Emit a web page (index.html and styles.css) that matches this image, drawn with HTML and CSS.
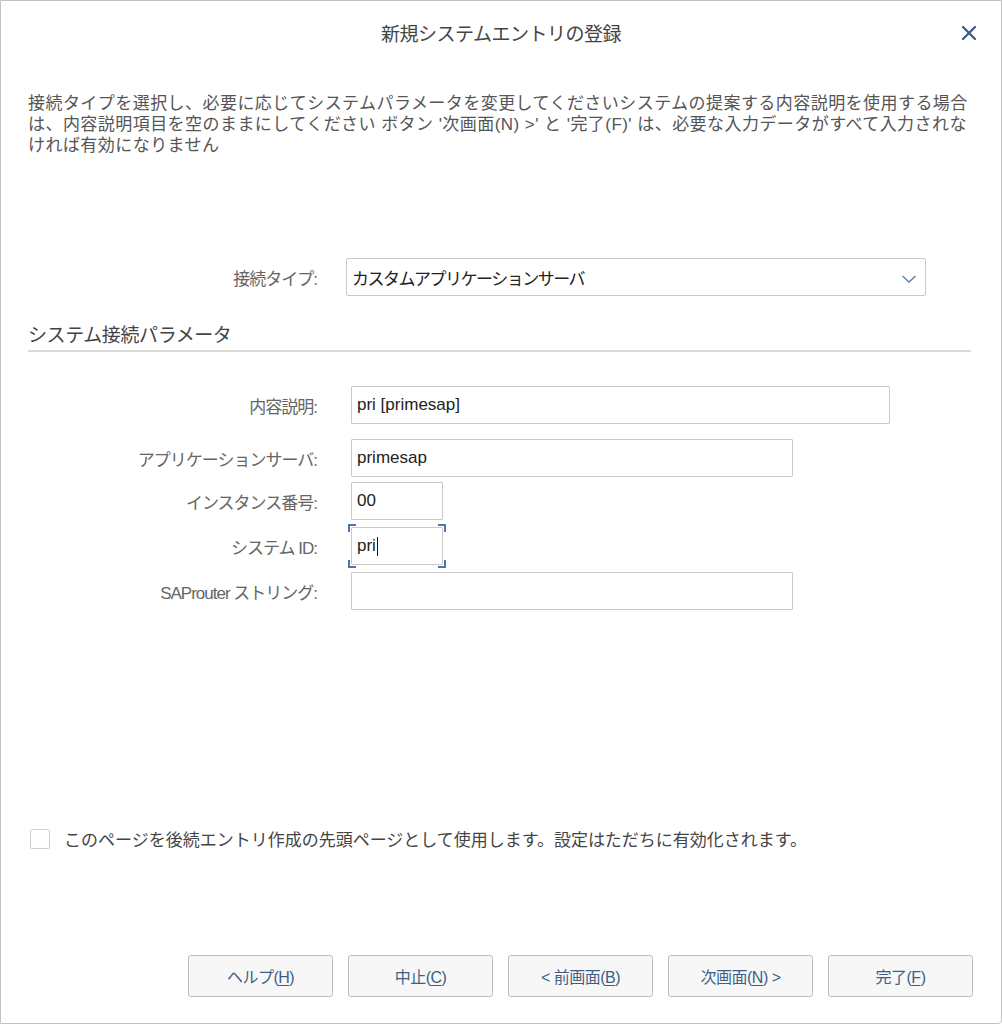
FILE: index.html
```html
<!DOCTYPE html>
<html lang="ja">
<head>
  <meta charset="UTF-8">
  <title>新規システムエントリの登録</title>
  <link rel="stylesheet" href="styles.css">
</head>
<body>

  <div class="dialog">
    <!-- タイトルバー -->
    <header class="dialog-header">
      <span></span>
      <h1 class="dialog-title">新規システムエントリの登録</h1>
      <button class="close-button" aria-label="閉じる">
        <svg width="16" height="16" viewBox="0 0 16 16">
          <path d="M2 2 L14 14 M14 2 L2 14" stroke="#3d5f86" stroke-width="2.4" stroke-linecap="round"/>
        </svg>
      </button>
    </header>

    <p class="intro">
      接続タイプを選択し、必要に応じてシステムパラメータを変更してくださいシステムの提案する内容説明を使用する場合<br>
      は、内容説明項目を空のままにしてください ボタン '次画面(N) &gt;' と '完了(F)' は、必要な入力データがすべて入力されな<br>
      ければ有効になりません
    </p>

    <div class="form-row type-row">
      <label class="form-label">接続タイプ:</label>
      <div class="select-box">
        <span>カスタムアプリケーションサーバ</span>
        <svg width="16" height="10" viewBox="0 0 16 10">
          <path d="M1.5 2 L8 8 L14.5 2" fill="none" stroke="#5a7ea6" stroke-width="1.3"/>
        </svg>
      </div>
    </div>

    <h2 class="section-title">システム接続パラメータ</h2>

    <div class="params">
      <div class="form-row first">
        <label class="form-label">内容説明:</label>
        <div class="field w-desc">pri [primesap]</div>
      </div>
      <div class="form-row">
        <label class="form-label">アプリケーションサーバ:</label>
        <div class="field w-wide">primesap</div>
      </div>
      <div class="form-row">
        <label class="form-label">インスタンス番号:</label>
        <div class="field w-short">00</div>
      </div>
      <div class="form-row">
        <label class="form-label">システム ID:</label>
        <div class="field w-short focused">pri<span class="caret"></span></div>
      </div>
      <div class="form-row">
        <label class="form-label">SAProuter ストリング:</label>
        <div class="field w-wide"></div>
      </div>
    </div>

    <label class="check-row">
      <span class="checkbox"></span>
      このページを後続エントリ作成の先頭ページとして使用します。設定はただちに有効化されます。
    </label>

    <footer class="button-bar">
      <button class="dlg-button">ヘルプ(<u>H</u>)</button>
      <button class="dlg-button">中止(<u>C</u>)</button>
      <button class="dlg-button">&lt; 前画面(<u>B</u>)</button>
      <button class="dlg-button">次画面(<u>N</u>) &gt;</button>
      <button class="dlg-button">完了(<u>F</u>)</button>
    </footer>
  </div>

</body>
</html>
```

FILE: styles.css
```css
/* ベース */
* { margin:0; padding:0; box-sizing:border-box; }
body {
  font-family:"Liberation Sans","Noto Sans CJK JP",sans-serif;
  background:#fff; color:#333;
}

/* ダイアログ枠 */
.dialog {
  width:1002px; height:1024px;
  border:1px solid #c2c2c2; border-radius:0 0 4px 0;
  display:flex; flex-direction:column;
}

/* タイトル */
.dialog-header {
  height:63px;
  display:grid; grid-template-columns:1fr auto 1fr; align-items:center;
}
.dialog-title {
  font-size:19px; font-weight:normal; color:#444; letter-spacing:-0.5px;
}
.close-button {
  justify-self:end; margin-right:22px;
  background:none; border:none; width:20px; height:20px;
  display:flex; align-items:center; justify-content:center; cursor:pointer;
}

/* 説明文 */
.intro {
  margin-top:29px; padding:0 30px 0 27px;
  font-size:17px; line-height:21px; color:#555; letter-spacing:0.45px;
  white-space:nowrap;
}

/* フォーム行 */
.form-row {
  display:grid; grid-template-columns:316px 1fr; column-gap:29px;
  align-items:center; margin-bottom:7px;
}
.form-label {
  text-align:right; font-size:17px; color:#666; letter-spacing:-1px;
}
.type-row { margin-top:102px; margin-bottom:0; }

.select-box {
  width:580px; height:38px;
  border:1px solid #c9c9c9; border-radius:2px;
  display:flex; align-items:center; justify-content:space-between;
  padding:0 8px 0 5px;
  font-size:17px; color:#222; letter-spacing:-1.5px;
}
.select-box svg { margin-top:4px; }

/* セクション見出し */
.section-title {
  margin:28px 30px 0 27px; padding-bottom:2px;
  border-bottom:2px solid #dadada;
  font-size:19px; font-weight:normal; line-height:24px; color:#444; letter-spacing:-0.4px;
}

/* 入力項目 */
.params { margin-top:34px; }
.params .form-row.first { margin-bottom:15px; }
.params .form-row:nth-child(2) { margin-bottom:5px; }

.field {
  position:relative; margin-left:5px; height:38px;
  border:1px solid #c9c9c9; border-radius:1px;
  display:flex; align-items:center; padding:0 5px;
  font-size:17px; color:#222;
}
.w-desc  { width:539px; }
.w-wide  { width:442px; }
.w-short { width:92px; }

.caret { display:inline-block; width:1px; height:19px; background:#111; margin-left:1px; }

/* フォーカス枠（四隅） */
.field.focused::before,
.field.focused::after {
  content:""; position:absolute; left:-4px; right:-4px; top:-4px; bottom:-4px;
  pointer-events:none;
  --c:#4c78a8;
  background:
    linear-gradient(var(--c),var(--c)) left top / 8px 2px no-repeat,
    linear-gradient(var(--c),var(--c)) left top / 2px 8px no-repeat,
    linear-gradient(var(--c),var(--c)) right top / 8px 2px no-repeat,
    linear-gradient(var(--c),var(--c)) right top / 2px 8px no-repeat;
}
.field.focused::after {
  background:
    linear-gradient(var(--c),var(--c)) left bottom / 8px 2px no-repeat,
    linear-gradient(var(--c),var(--c)) left bottom / 2px 8px no-repeat,
    linear-gradient(var(--c),var(--c)) right bottom / 8px 2px no-repeat,
    linear-gradient(var(--c),var(--c)) right bottom / 2px 8px no-repeat;
}

/* チェックボックス */
.check-row {
  margin-top:auto; margin-left:29px;
  display:flex; align-items:center; gap:14px;
  font-size:17px; color:#444; letter-spacing:0;
}
.checkbox {
  width:20px; height:20px; border:1px solid #cfcfcf; border-radius:2px; background:#fff;
}

/* ボタン */
.button-bar {
  margin:104px 28px 26px 0;
  display:flex; justify-content:flex-end; gap:15px;
}
.dlg-button {
  width:145px; height:42px;
  background:#f7f7f7; border:1px solid #bdbdbd; border-radius:3px;
  font-family:inherit; font-size:16px; color:#3d5f86; letter-spacing:-0.5px;
  cursor:pointer;
}
.dlg-button u { text-underline-offset:2px; }
```
